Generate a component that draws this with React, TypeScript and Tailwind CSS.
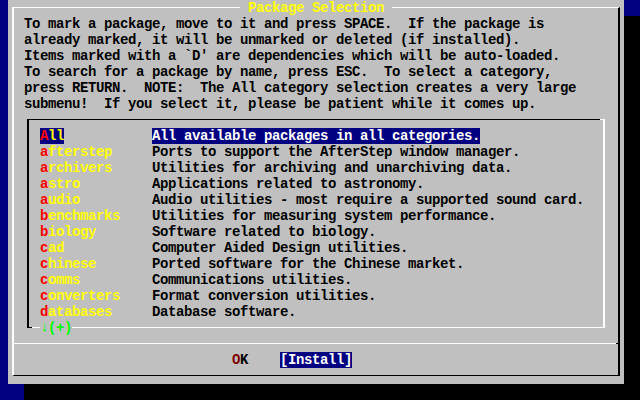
import React from 'react';

const lines = [
  'To mark a package, move to it and press SPACE.  If the package is',
  'already marked, it will be unmarked or deleted (if installed).',
  "Items marked with a `D' are dependencies which will be auto-loaded.",
  'To search for a package by name, press ESC.  To select a category,',
  'press RETURN.  NOTE:  The All category selection creates a very large',
  'submenu!  If you select it, please be patient while it comes up.',
];

const items: [string, string][] = [
  ['All', 'All available packages in all categories.'],
  ['afterstep', 'Ports to support the AfterStep window manager.'],
  ['archivers', 'Utilities for archiving and unarchiving data.'],
  ['astro', 'Applications related to astronomy.'],
  ['audio', 'Audio utilities - most require a supported sound card.'],
  ['benchmarks', 'Utilities for measuring system performance.'],
  ['biology', 'Software related to biology.'],
  ['cad', 'Computer Aided Design utilities.'],
  ['chinese', 'Ported software for the Chinese market.'],
  ['comms', 'Communications utilities.'],
  ['converters', 'Format conversion utilities.'],
  ['databases', 'Database software.'],
];

function Item({ name, desc, selected }: { name: string; desc: string; selected?: boolean }) {
  return (
    <div className="flex h-4">
      <div className="w-[112px]">
        <span className={selected ? 'bg-[#000080]' : ''}>
          <span className="text-[#ff0000]">{name[0]}</span>
          <span className="text-[#ffff00]">{name.slice(1)}</span>
        </span>
      </div>
      <span className={selected ? 'bg-[#000080] text-white' : 'text-black'}>{desc}</span>
    </div>
  );
}

export default function App() {
  return (
    <div
      className="w-[640px] h-[400px] bg-[#000080] overflow-hidden text-[14px] leading-[16px] font-bold tracking-[-0.4px] whitespace-pre"
      style={{ fontFamily: '"Liberation Mono", "DejaVu Sans Mono", monospace' }}
    >
      <div className="relative ml-[8px] w-[616px] h-[384px] bg-[#c0c0c0] pt-[7px] px-[4px] shadow-[16px_16px_0_0_#000]">
        <div className="h-[369px] border-t border-b border-l-2 border-r-2 border-t-white border-l-white border-r-black border-b-black">
          <div className="pt-[8px] pl-[10px] text-black">
            {lines.map((l) => (
              <div key={l} className="h-4">{l}</div>
            ))}
          </div>

          <div className="relative mt-[7px] ml-[13px] w-[578px] pt-[8px] pb-[7px] pl-[11px] border-t border-b border-l-2 border-r-2 border-t-black border-l-black border-r-white border-b-white">
            {items.map(([n, d], i) => (
              <Item key={n} name={n} desc={d} selected={i === 0} />
            ))}
            <div className="absolute left-[-2px] bottom-[-1px] w-[5px] h-px bg-black" />
            <div className="absolute right-[-2px] top-[-1px] w-[5px] h-px bg-white" />
            <div className="absolute left-[11px] bottom-[-9px] h-4 overflow-hidden flex bg-[#c0c0c0] text-[#00ff00]">
              <span className="w-[8px] text-[15px] leading-[16px] text-center tracking-normal">↓</span>
              <span>(+)</span>
            </div>
          </div>

          <div className="mt-[15px] h-px bg-white flex justify-end">
            <div className="w-[2px] h-px bg-black" />
          </div>

          <div className="mt-[8px] h-4 pl-[218px] flex">
            <span className="text-[#800000]">O</span>
            <span className="text-black">K</span>
            <span className="ml-[32px] bg-[#000080] text-white">[Install]</span>
          </div>
        </div>

        <div className="absolute inset-x-0 top-0 flex justify-center">
          <div className="h-4 bg-[#c0c0c0] text-[#ffff00]"> Package Selection </div>
        </div>
      </div>
    </div>
  );
}
